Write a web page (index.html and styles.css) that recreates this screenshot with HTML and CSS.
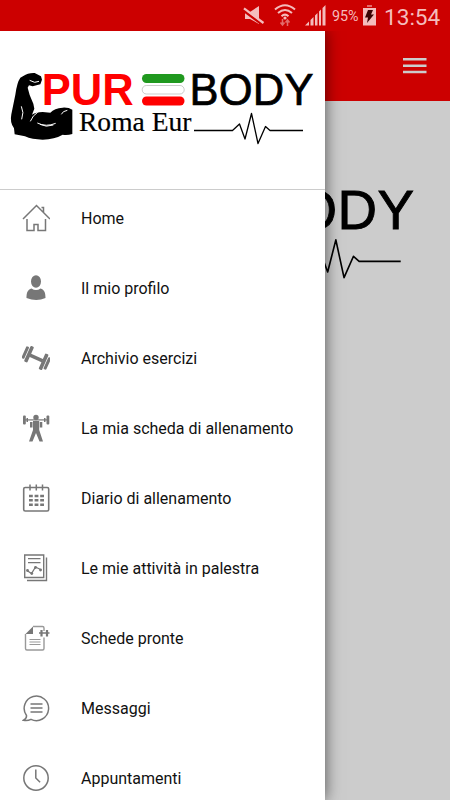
FILE: index.html
```html
<!DOCTYPE html>
<html lang="it">
<head>
<meta charset="utf-8">
<title>Pure Body Roma Eur</title>
<link rel="stylesheet" href="styles.css">
</head>
<body>
<div class="statusbar">
  <svg class="s-mute" width="22" height="20" viewBox="0 0 22 20"><path d="M2 6h5l9-6v18l-9-5H2z" fill="#f4bcbc"/><path d="M-1 3.500L20 19" stroke="#cc0000" stroke-width="2.500"/><path d="M1 2.300L20.500 17" stroke="#f4bcbc" stroke-width="2.200"/></svg>
  <svg class="s-wifi" width="22" height="23" viewBox="0 0 22 23"><g fill="none" stroke="#f4bcbc" stroke-width="2"><path d="M1 5.500Q11-3 21 5.500M4 9Q11 3 18 9M7.500 12.200Q11 9 14.500 12.200"/></g><circle cx="11" cy="14" r="1.600" fill="#f4bcbc"/><path d="M8.500 15v6M6.500 18.500l2 2.500 2-2.500M13.500 22v-6M11.500 18.500l2-2.500 2 2.500" fill="none" stroke="#e26b6b" stroke-width="1.500"/></svg>
  <svg class="s-signal" width="21" height="21" viewBox="0 0 21 21"><path d="M0 20.500L4 16.500v4zM5.500 15L8.500 12v8.500h-3zM10 10.500l2.500-2.500v12.500H10zM14 6.500L16 4.500v16h-2zM17.500 3L20.500 0v20.500h-3z" fill="#f4bcbc"/></svg>
  <span class="percent">95%</span>
  <svg class="s-battery" width="13" height="21" viewBox="0 0 13 21"><path d="M4 0h5v2H4z" fill="#e26b6b"/><path d="M0 3h13v17.500H0z" fill="#f4bcbc"/><path d="M5 5h5L8 9.500h3L4 18l1-5.500H2z" fill="#3a0505"/></svg>
  <span class="clock">13:54</span>
</div>
<header class="appbar">
  <svg width="24" height="16" viewBox="0 0 24 16"><path d="M0 1.300h23.500M0 7.800h23.500M0 14h23.500" stroke="#ccc" stroke-width="2.500"/></svg>
</header>
<main class="page">
  <svg class="page-logo" viewBox="0 0 325 158"><use href="#logo"/></svg>
</main>
<nav class="drawer">
  <div class="brand">
    <svg width="325" height="158" viewBox="0 0 325 158">
      <g id="logo">
        <g transform="translate(0 29) scale(.33333)">
          <path d="M70 48Q84 38 104 39L123 49L126 59L121 73L98 79L87 76L83 83L89 105L100 131L103 146L96 164Q108 156 128 156L151 158Q163 145 188 143Q206 142 217 149V222Q202 226 188 224Q164 238 128 239Q96 239 75 229L44 223L42 205Q29 188 34 163L46 104Q51 67 61 53Z"/>
          <path d="M64 139Q73 157 65 178M91 184Q98 166 113 157M112 189Q138 202 167 190M120 193Q138 203 160 195M184 163Q188 153 202 151M89 61L104 67L117 64" fill="none" stroke="#fff" stroke-width="3"/>
        </g>
        <text class="pur" x="41.700" y="74.200" textLength="92">PUR</text>
        <rect x="142" y="43" width="42.500" height="9" rx="4.500" fill="#20991f"/>
        <rect x="142.200" y="54.500" width="42" height="8.500" rx="4.200" fill="#fff" stroke="#999" stroke-width=".5"/>
        <rect x="142" y="65.500" width="42.500" height="9" rx="4.500" fill="#f00"/>
        <text class="body-word" x="189.500" y="74.200" textLength="124">BODY</text>
        <text class="place" x="79" y="99.500" textLength="112.500">Roma Eur</text>
        <path d="M194 99.500H232.500L239.500 93L245 108L251.500 82.500L258 112.500L265.500 95.500L270 99.500H303" fill="none" stroke="#000" stroke-width="1.300" stroke-linejoin="round"/>
      </g>
    </svg>
  </div>
  <ul class="menu">
    <li><svg class="icon" viewBox="0 0 28 28"><path d="M1 15L14.500 1.500L28 15M5 15v11.500h7v-6h4v6h7.500V15M19.500 3.500h2v5" fill="none" stroke="#777" stroke-width="1.500"/></svg><span>Home</span></li>
    <li><svg class="icon" viewBox="0 0 28 28"><ellipse cx="14" cy="7.500" rx="5" ry="6.200" fill="#777"/><path d="M4.500 24c0-5 1-8.500 5-9.500q4.500 3 9 0c4 1 5 4.500 5 9.500q-9 4-19 0z" fill="#777"/></svg><span>Il mio profilo</span></li>
    <li><svg class="icon" viewBox="0 0 28 28"><g transform="translate(14.300 14) rotate(24)" fill="#777"><path d="M-7-1.700H7V1.700H-7z"/><rect x="-10" y="-9" width="3.600" height="17" rx="1"/><rect x="6.400" y="-8" width="3.600" height="17" rx="1"/><rect x="-13.800" y="-7" width="3" height="13" rx="1"/><rect x="10.800" y="-6" width="3" height="13" rx="1"/></g></svg><span>Archivio esercizi</span></li>
    <li><svg class="icon" viewBox="0 0 28 28"><g fill="#777"><path d="M3 5.300h22v1.200H3z"/><rect x="1" y="1.500" width="2.800" height="9" rx="1"/><rect x="24.500" y="1.500" width="2.800" height="9" rx="1"/><path d="M4.500 4h1.500v4H4.500zM22 4h1.500v4H22z"/><circle cx="14" cy="3.500" r="2.700"/><path d="M8 8h2.500v5.500H8zM17.800 8h2.500v5.500h-2.500zM11 7h6.200v9L21 27.500h-3.500L14 19l-3.500 8.500H7L11 16z"/></g></svg><span>La mia scheda di allenamento</span></li>
    <li><svg class="icon" viewBox="0 0 28 28"><rect x="1.700" y="3.500" width="25" height="23.500" rx="1.500" fill="none" stroke="#777" stroke-width="1.600"/><path d="M8 .5v6M14.300.5v6M20.500.5v6" stroke="#777" stroke-width="1.500"/><path d="M7 12h15M7 16.300h15M7 20.700h15" stroke="#777" stroke-width="2.500" stroke-dasharray="3.800 1.800"/></svg><span>Diario di allenamento</span></li>
    <li><svg class="icon" viewBox="0 0 28 28"><path d="M2.700 1h19v22.500h-19zM24.500 3.500v23H5" fill="none" stroke="#777" stroke-width="1.400"/><path d="M6 4.700h12.500M6 8.700h12.500" stroke="#777" stroke-width="1.200"/><path d="M5 16.500l4.500 3L13.500 13l6 3" fill="none" stroke="#777" stroke-width="1.300"/><g fill="#777"><circle cx="5.500" cy="16.500" r="1.400"/><circle cx="9.800" cy="19.500" r="1.400"/><circle cx="13.500" cy="13.500" r="1.400"/><circle cx="18.500" cy="16" r="1.400"/></g></svg><span>Le mie attività in palestra</span></li>
    <li><svg class="icon" viewBox="0 0 28 28"><path d="M11 2.500h9.500q1.500 0 1.500 1.500v3M22 13.500v11q0 1.500-1.500 1.500H5q-1.500 0-1.500-1.500V10" fill="none" stroke="#999" stroke-width="1.400"/><path d="M3.500 10L11 2.500V10z" fill="#777"/><path d="M7.500 15.500H18.500M7.500 18H18.500M7.500 20.500H18.500" stroke="#999" stroke-width="1"/><path d="M17 9h10.500" stroke="#777" stroke-width="1.500"/><path d="M19.500 6v6.500M25 6v6.500" stroke="#777" stroke-width="2.200"/></svg><span>Schede pronte</span></li>
    <li><svg class="icon" viewBox="0 0 28 28"><path d="M4.500 21.500A12.200 12.200 0 1 1 9 25.300Q5.500 27 1.500 26.200Q4.800 24.500 4.500 21.500z" fill="none" stroke="#777" stroke-width="1.500"/><path d="M8.500 10h12M8.500 14h12M8.500 18h12" stroke="#777" stroke-width="1.500"/></svg><span>Messaggi</span></li>
    <li><svg class="icon" viewBox="0 0 28 28"><circle cx="14" cy="14" r="12.200" fill="none" stroke="#777" stroke-width="1.500"/><path d="M13.800 5.500V14l4.300 4.300" fill="none" stroke="#777" stroke-width="1.500"/></svg><span>Appuntamenti</span></li>
  </ul>
</nav>
</body>
</html>
```
FILE: styles.css
```css
* { box-sizing: border-box; }
html, body { height: 100%; overflow: hidden; }
body {
  margin: 0;
  background: #ccc;
  font-family: Roboto, "Liberation Sans", sans-serif;
}
svg { display: block; flex: none; }
.statusbar {
  height: 31px;
  display: flex;
  align-items: flex-start;
  justify-content: flex-end;
  padding: 5px 11px 0 0;
  background: #c00;
  color: #f4bcbc;
}
.s-mute { margin-right: 9px; margin-top: 1px; }
.s-wifi { margin-right: 9px; margin-top: -1px; }
.s-signal { margin-right: 6px; }
.percent { width: 28px; margin-right: 3px; font-size: 14.300px; line-height: 23px; white-space: nowrap; }
.s-battery { margin-right: 8px; }
.clock { width: 55px; font-size: 22.600px; line-height: 25px; white-space: nowrap; }
.appbar {
  height: 70px;
  display: flex;
  align-items: center;
  justify-content: flex-end;
  padding-right: 23px;
  background: #c00;
}
.page { padding: 34.500px 0 0 18.500px; }
.page-logo { width: 409.500px; height: 199px; }
.pur { font: bold 43.500px "Liberation Sans", sans-serif; fill: #f00; }
.body-word { font: 43.500px "Liberation Sans", sans-serif; stroke: #000; stroke-width: .7px; }
.place { font: 27.500px "Liberation Serif", serif; stroke: #000; stroke-width: .2px; }
.drawer {
  position: absolute;
  top: 31px;
  left: 0;
  bottom: 0;
  width: 325px;
  overflow: hidden;
  background: #fff;
  box-shadow: 0 0 15px rgba(0, 0, 0, .6);
  clip-path: inset(0 -30px 0 0);
}
.brand { height: 159px; border-bottom: 1px solid #ccc; }
.menu {
  margin: 0;
  padding: 0;
  list-style: none;
  display: flex;
  flex-direction: column;
  gap: 14px;
}
.menu li {
  height: 56px;
  display: flex;
  align-items: center;
  gap: 31.500px;
  padding-left: 21.500px;
  font-size: 16px;
  color: #111;
  white-space: nowrap;
}
.icon { width: 28px; height: 28px; }
```
